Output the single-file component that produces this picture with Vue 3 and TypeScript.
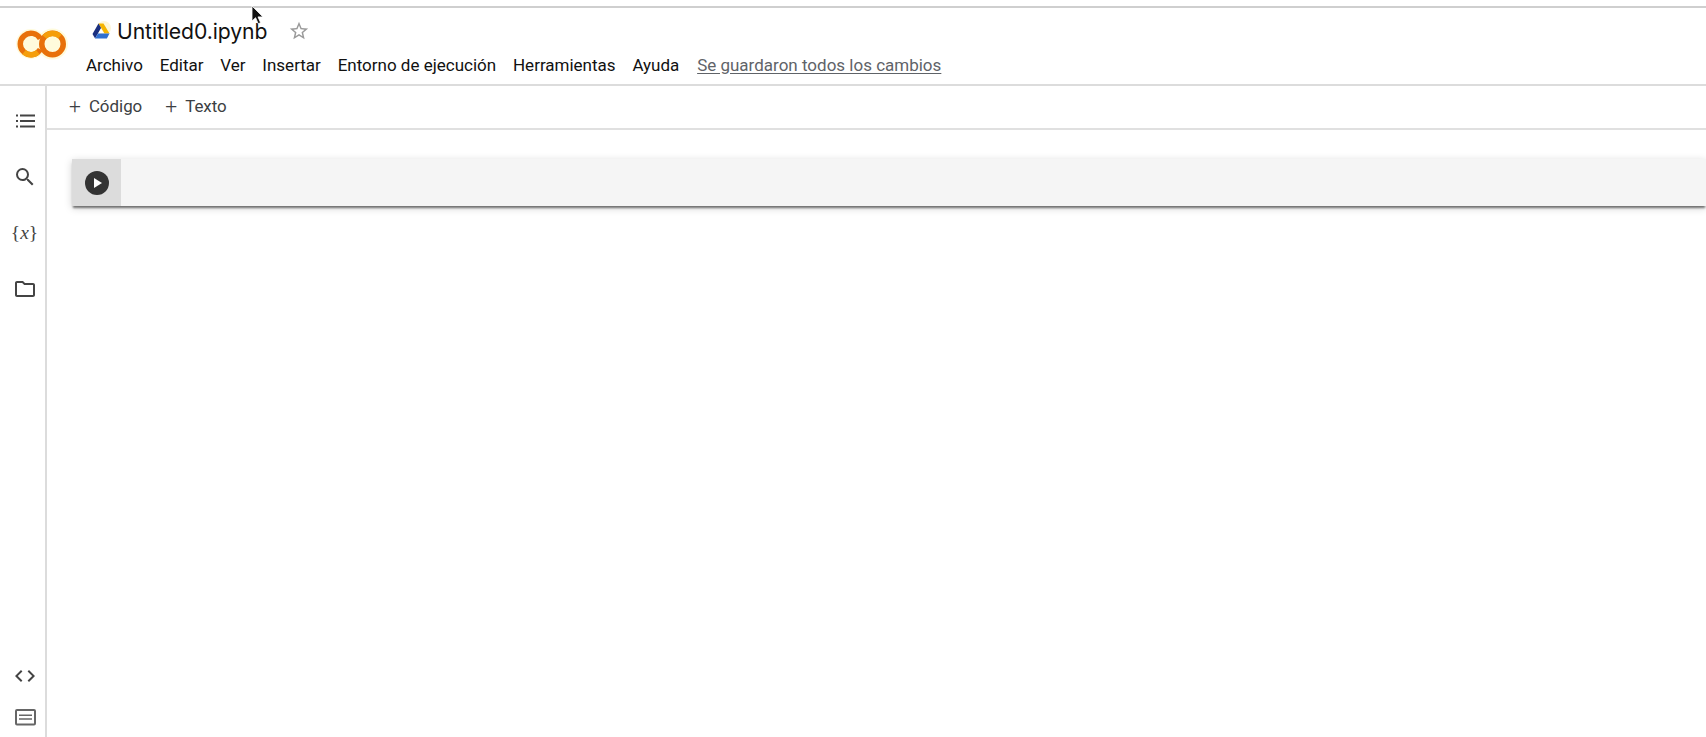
<script setup lang="ts">
const menus: string[] = ['Archivo', 'Editar', 'Ver', 'Insertar', 'Entorno de ejecución', 'Herramientas', 'Ayuda']
</script>

<template>
  <div class="page">
    <div class="topstrip"></div>
    <header class="header">
      <svg class="logo" width="52" height="32" viewBox="0 0 52 32" aria-label="Colab">
        <circle cx="15" cy="16" r="15" class="halo" />
        <circle cx="36.5" cy="16" r="15.5" class="halo" />
        <path d="M24.3 10.6 A10.75 10.75 0 1 0 24.3 21.4" class="ring" />
        <circle cx="36.5" cy="16" r="10.75" class="ring" />
        <path d="M8 24.2 A10.75 10.75 0 0 0 21.9 24.2" class="ring-y" />
        <path d="M28.5 9 A10.75 10.75 0 0 1 44 8.4" class="ring-y" />
      </svg>
      <div class="head-main">
        <div class="title-row">
          <svg class="drive" width="20" height="20" viewBox="0 0 20 20">
            <circle cx="13" cy="7" r="7" fill="#fdf6d8" />
            <path d="M7.5 2.5h5l6 10h-5z" fill="#f5b400" />
            <path d="M7.5 2.5 1.5 13l2.6 4.5 6-10.5z" fill="#1a2f7f" />
            <path d="M4.1 17.5h11.8l2.6-5H7z" fill="#2f6fd0" />
            <path d="M10 7.5 7.5 12h5z" fill="#fff" />
          </svg>
          <span class="title">Untitled0.ipynb</span>
          <svg class="star" width="22" height="22" viewBox="0 0 24 24">
            <path d="M22 9.24l-7.19-.62L12 2 9.19 8.63 2 9.24l5.46 4.73L5.82 21 12 17.27 18.18 21l-1.63-7.03L22 9.24zM12 15.4l-3.76 2.27 1-4.28-3.32-2.88 4.38-.38L12 6.1l1.71 4.04 4.38.38-3.32 2.88 1 4.28L12 15.4z" fill="#9a9a9a" />
          </svg>
        </div>
        <nav class="menu">
          <span v-for="m in menus" :key="m" class="menu-item">{{ m }}</span>
          <span class="saved">Se guardaron todos los cambios</span>
        </nav>
      </div>
    </header>
    <div class="body">
      <aside class="side">
        <div class="side-top">
          <svg class="ic" width="24" height="24" viewBox="0 0 24 24">
            <path d="M3 5.5h2v2H3zM3 11h2v2H3zM3 16.5h2v2H3zM7 5.6h15v1.8H7zM7 11.1h15v1.8H7zM7 16.6h15v1.8H7z" fill="#444" />
          </svg>
          <svg class="ic" width="24" height="24" viewBox="0 0 24 24">
            <path d="M15.5 14h-.79l-.28-.27A6.47 6.47 0 0 0 16 9.5 6.5 6.5 0 1 0 9.5 16c1.61 0 3.09-.59 4.23-1.57l.27.28v.79l5 4.99L20.49 19l-4.99-5zm-6 0C7.01 14 5 11.99 5 9.5S7.01 5 9.5 5 14 7.01 14 9.5 11.99 14 9.5 14z" fill="#444" />
          </svg>
          <span class="vars">{<i>x</i>}</span>
          <svg class="ic" width="24" height="24" viewBox="0 0 24 24">
            <path d="M10 4H4c-1.1 0-2 .9-2 2v12c0 1.1.9 2 2 2h16c1.1 0 2-.9 2-2V8c0-1.1-.9-2-2-2h-8l-2-2zm-.83 2 2 2H20v10H4V6h5.17z" fill="#444" />
          </svg>
        </div>
        <div class="side-bottom">
          <svg class="ic" width="24" height="24" viewBox="0 0 24 24">
            <path d="M9.4 16.6 4.8 12l4.6-4.6L8 6l-6 6 6 6 1.4-1.4zm5.2 0 4.6-4.6-4.6-4.6L16 6l6 6-6 6-1.4-1.4z" fill="#444" />
          </svg>
          <svg class="ic" width="24" height="24" viewBox="0 0 24 24">
            <rect x="3" y="5" width="19" height="14.5" rx="1" fill="none" stroke="#666" stroke-width="2" />
            <path d="M6 9.6h13v1.5H6zM6 13.3h13v1.5H6z" fill="#666" />
          </svg>
        </div>
      </aside>
      <main class="main">
        <div class="toolbar">
          <button class="tool"><span class="plus">+</span>Código</button>
          <button class="tool"><span class="plus">+</span>Texto</button>
        </div>
        <div class="notebook">
          <div class="cell">
            <div class="run">
              <svg width="26" height="26" viewBox="0 0 26 26">
                <circle cx="13" cy="13" r="12" fill="#333" />
                <path d="M10 8l8 5-8 5z" fill="#fff" />
              </svg>
            </div>
          </div>
        </div>
      </main>
    </div>
    <svg class="cursor" width="14" height="20" viewBox="0 0 14 20">
      <path d="M1 1v15l3.6-3.3 2.6 6 2.4-1-2.6-5.8H12z" fill="#111" stroke="#fff" stroke-width=".8" />
    </svg>
  </div>
</template>

<style>
html, body { margin: 0; background: #fff; }
</style>

<style scoped>
.page {
  position: relative;
  width: 1706px;
  height: 737px;
  overflow: hidden;
  display: flex;
  flex-direction: column;
  background: #fff;
  font-family: Roboto, "Liberation Sans", sans-serif;
  color: #1f1f1f;
}
.topstrip {
  height: 6px;
  flex: none;
  border-bottom: 2px solid #cfcfcf;
}
.header {
  flex: none;
  height: 78px;
  box-sizing: border-box;
  display: flex;
  border-bottom: 2px solid #dcdcdc;
}
.halo { fill: #fffbdc; }
.ring { fill: none; stroke: #e8710a; stroke-width: 5.5; }
.ring-y { fill: none; stroke: #f59e0b; stroke-width: 5.5; }
.logo {
  flex: none;
  margin: 20px 0 0 16px;
}
.head-main {
  margin-left: 18px;
  display: flex;
  flex-direction: column;
}
.title-row {
  display: flex;
  align-items: center;
  height: 24px;
  margin-top: 11px;
  margin-left: 5px;
}
.drive { flex: none; }
.title {
  font-family: Inter, "Open Sans", sans-serif;
  font-size: 21.2px;
  margin-left: 6px;
  color: #111;
  letter-spacing: -0.1px;
}
.star {
  flex: none;
  margin-left: 21px;
}
.menu {
  display: flex;
  align-items: center;
  margin-top: 12px;
  font-size: 17px;
  height: 20px;
  gap: 16.8px;
  color: #111;
}
.saved {
  color: #5f6368;
  text-decoration: underline;
  text-underline-offset: 2px;
  margin-left: 1px;
}
.body {
  flex: 1;
  display: flex;
  min-height: 0;
}
.side {
  width: 47px;
  flex: none;
  box-sizing: border-box;
  border-right: 2px solid #dcdcdc;
  display: flex;
  flex-direction: column;
  justify-content: space-between;
  align-items: center;
  padding: 23px 0 8px 4px;
}
.side-top {
  display: flex;
  flex-direction: column;
  align-items: center;
  gap: 32px;
}
.side-bottom {
  display: flex;
  flex-direction: column;
  align-items: center;
  gap: 17px;
}
.ic { display: block; }
.vars {
  font-family: "Liberation Serif", serif;
  font-size: 19.5px;
  line-height: 24px;
  height: 24px;
  color: #444;
}
.main {
  flex: 1;
  min-width: 0;
  display: flex;
  flex-direction: column;
}
.toolbar {
  flex: none;
  height: 44px;
  box-sizing: border-box;
  border-bottom: 2px solid #e0e0e0;
  display: flex;
  align-items: center;
  padding: 0 0 2px 22px;
  gap: 23px;
}
.tool {
  border: 0;
  background: none;
  padding: 0;
  font: inherit;
  font-size: 16.9px;
  color: #3c4043;
  display: flex;
  align-items: center;
}
.plus {
  font-size: 21px;
  font-weight: 300;
  line-height: 1;
  margin-right: 8px;
}
.notebook {
  flex: 1;
  padding: 29px 0 0 25px;
}
.cell {
  height: 47px;
  background: #f5f5f5;
  box-shadow: 0 3px 2px -1px rgba(0, 0, 0, 0.5), 0 2px 8px rgba(0, 0, 0, 0.18);
  display: flex;
}
.run {
  width: 49px;
  background: #dcdcdc;
  display: flex;
  align-items: center;
  justify-content: center;
}
.cursor {
  position: absolute;
  left: 251px;
  top: 5px;
}
</style>
